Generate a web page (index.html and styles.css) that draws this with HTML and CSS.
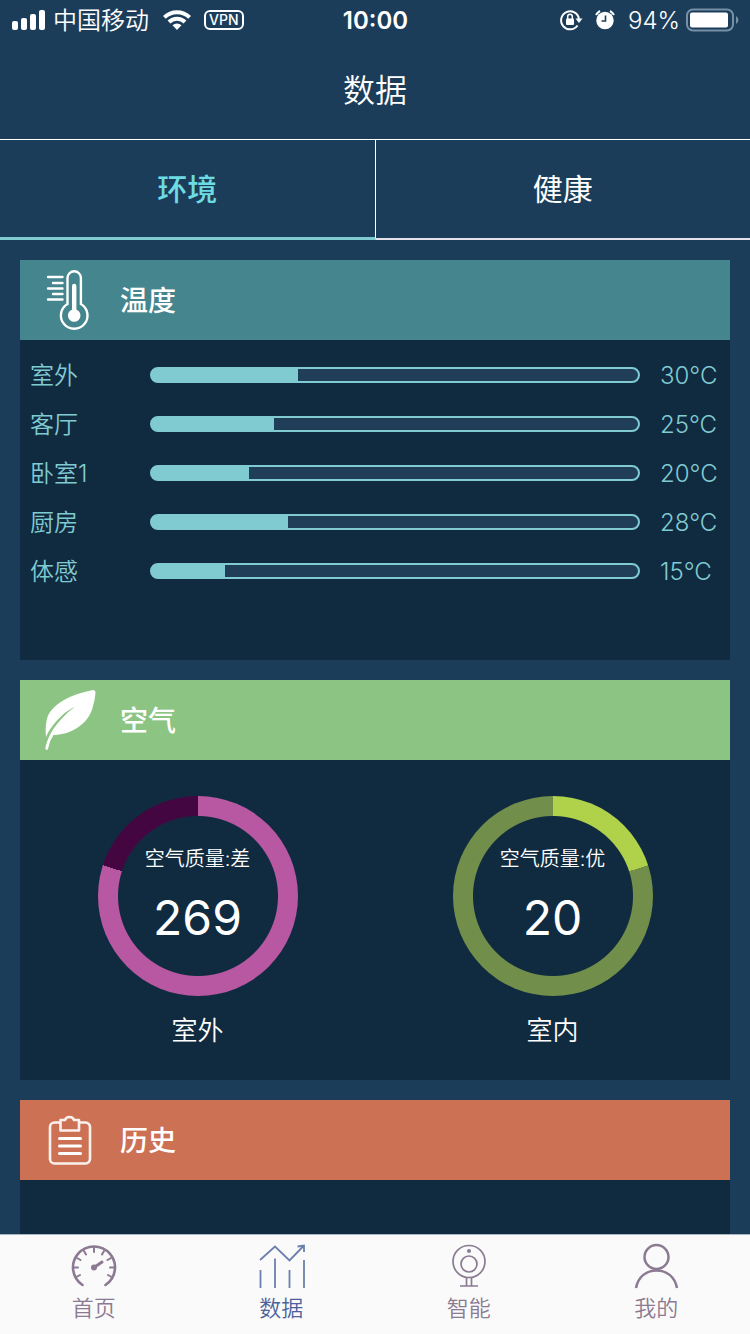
FILE: index.html
```html
<!DOCTYPE html>
<html lang="zh-CN">
<head>
<meta charset="utf-8">
<meta name="viewport" content="width=device-width, initial-scale=1">
<title>数据</title>
<link rel="stylesheet" href="styles.css">
</head>
<body>
<div class="app">
  <div class="status">
    <div class="status-side">
      <svg width="34" height="20" viewBox="0 0 34 20" fill="currentColor" aria-hidden="true">
        <rect x="0" y="11" width="6" height="9" rx="2"/><rect x="9" y="8" width="6" height="12" rx="2"/><rect x="18" y="4" width="6" height="16" rx="2"/><rect x="27" y="0" width="6" height="20" rx="2"/>
      </svg>
      <span class="carrier">中国移动</span>
      <svg class="wifi" width="28" height="20" viewBox="0 0 28 20" aria-hidden="true">
        <g fill="none" stroke="currentColor" stroke-width="4"><path d="M1.4 7.4A18 18 0 0 1 26.600 7.400"/><path d="M6 12A11.500 11.500 0 0 1 22 12"/></g>
        <path fill="currentColor" d="M14 20l-4.500-4.800a6.500 6.500 0 0 1 9 0z"/>
      </svg>
      <span class="vpn">VPN</span>
    </div>
    <time class="clock">10:00</time>
    <div class="status-side status-right">
      <svg width="24" height="22" viewBox="0 0 24 22" aria-hidden="true">
        <path d="M18.500 16.500A9 9 0 1 1 20 10" fill="none" stroke="currentColor" stroke-width="2"/>
        <path d="M16.500 9.500h7L20 14z" fill="currentColor"/>
        <rect x="7" y="9.500" width="8" height="6.500" rx="1" fill="currentColor"/>
        <path d="M8.700 10V7.500a2.300 2.300 0 0 1 4.600 0V10" fill="none" stroke="currentColor" stroke-width="1.500"/>
      </svg>
      <svg class="alarm" width="20" height="20" viewBox="0 0 20 20" aria-hidden="true">
        <circle cx="10" cy="10.500" r="8.700" fill="currentColor"/>
        <path d="M10.500 5.500v5.500H6.500" fill="none" stroke="#1c3d5a" stroke-width="1.600"/>
        <path d="M1 5a10 10 0 0 1 4-4M19 5a10 10 0 0 0-4-4" fill="none" stroke="currentColor" stroke-width="2"/>
      </svg>
      <span class="percent">94%</span>
      <svg width="53" height="24" viewBox="0 0 53 24" aria-hidden="true">
        <rect x="1" y="1.500" width="46" height="21" rx="6" fill="none" stroke="#7690a6" stroke-width="2"/>
        <rect x="4" y="4.500" width="38" height="15" rx="2" fill="#fff"/>
        <path d="M50 8a4.500 4.500 0 0 1 0 8z" fill="#7690a6"/>
      </svg>
    </div>
  </div>

  <header class="titlebar"><h1>数据</h1></header>

  <div class="tabs" role="tablist">
    <button class="tab tab-active" role="tab" aria-selected="true">环境</button>
    <button class="tab" role="tab" aria-selected="false">健康</button>
  </div>

  <main class="content">
    <section class="card">
      <div class="card-head head-temp">
        <svg class="card-icon" viewBox="0 0 60 60" fill="none" stroke="currentColor" stroke-width="2.400" stroke-linecap="round" aria-hidden="true">
          <path d="M27.500 34V8a6.700 6.700 0 0 1 13.400 0v26a13.300 13.300 0 1 1-13.400 0z"/>
          <path d="M34.200 16v28" stroke-width="4.400"/><circle cx="34.200" cy="45.500" r="6.300" fill="currentColor" stroke="none"/>
          <path d="M8 7h14.500M13 13h9.500M8 18.500h14.500M13 24h9.500M8 29.500h14.500"/>
        </svg>
        <h2>温度</h2>
      </div>
      <div class="card-body">
        <ul class="temps">
          <li><span>室外</span><div class="track"><div class="fill" style="width:30%"></div></div><span>30°C</span></li>
          <li><span>客厅</span><div class="track"><div class="fill" style="width:25%"></div></div><span>25°C</span></li>
          <li><span>卧室1</span><div class="track"><div class="fill" style="width:20%"></div></div><span>20°C</span></li>
          <li><span>厨房</span><div class="track"><div class="fill" style="width:28%"></div></div><span>28°C</span></li>
          <li><span>体感</span><div class="track"><div class="fill" style="width:15%"></div></div><span>15°C</span></li>
        </ul>
      </div>
    </section>

    <section class="card">
      <div class="card-head head-air">
        <svg class="card-icon" viewBox="0 0 60 60" aria-hidden="true">
          <path fill="currentColor" d="M53 0C45 2 34 4 24 10C14 16 8 22 6.500 31C5.500 37 5.500 42 6 47C9 40 15 32 22 25.500Q29 19 35 17C30 20 25 25 20 30.500C13 38 8 47 5.500 57Q5 60 7 60Q8 60 8.500 57Q10 50 13.500 45C20 45 29 43 37 38C46 32 50 26 52.500 18Q55 10 55.500 3Q55.500 0 53 0z"/>
        </svg>
        <h2>空气</h2>
      </div>
      <div class="card-body gauges">
        <figure class="gauge">
          <div class="ring ring-bad"><span class="quality">空气质量:差</span><strong>269</strong></div>
          <figcaption>室外</figcaption>
        </figure>
        <figure class="gauge">
          <div class="ring ring-good"><span class="quality">空气质量:优</span><strong>20</strong></div>
          <figcaption>室内</figcaption>
        </figure>
      </div>
    </section>

    <section class="card">
      <div class="card-head head-history">
        <svg class="card-icon" viewBox="0 0 60 60" fill="none" stroke="currentColor" stroke-linejoin="round" aria-hidden="true">
          <path stroke-width="2.600" opacity=".9" d="M20 12.500h-5.500a4.500 4.500 0 0 0-4.500 4.500v32a4.500 4.500 0 0 0 4.500 4.500h31a4.500 4.500 0 0 0 4.500-4.500V17a4.500 4.500 0 0 0-4.500-4.500H40M20.500 10h4.500q1-3 4.500-3t4.500 3h5v10.500H20.500z"/>
          <path stroke-width="3" stroke-linecap="round" d="M19.500 28.500h21M19.500 36h21M19.500 43.500h21"/>
        </svg>
        <h2>历史</h2>
      </div>
      <div class="card-body"></div>
    </section>
  </main>

  <nav class="nav">
    <a class="nav-item" href="#home">
      <svg class="nav-icon" viewBox="0 0 48 48" fill="none" stroke="currentColor" stroke-width="2" stroke-linecap="round" aria-hidden="true">
        <path stroke-width="2.600" d="M12.500 42A21 21 0 1 1 35.500 42"/>
        <path d="M24 5v4M14 8l2 3.500M34 8l-2 3.500M7 15l3.500 2M41 15l-3.500 2M4 24.500h4M44 24.500h-4M6.500 34l3.500-2M41.500 34L38 32"/>
        <path stroke-width="3" d="M24 24.500l8-5.500"/><circle cx="24" cy="24.500" r="3" fill="currentColor" stroke="none"/>
      </svg>
      <span>首页</span>
    </a>
    <a class="nav-item nav-current" href="#data" aria-current="page">
      <svg class="nav-icon" viewBox="0 0 48 48" fill="none" stroke="#6c7fae" stroke-width="1.800" aria-hidden="true">
        <path d="M3.500 27v18M18 15.500V45M32.500 27v18M47 17v28M3 17L18 3.500 32.500 17.500 46.500 3M40.500 3.500l6.500-1V9"/>
      </svg>
      <span>数据</span>
    </a>
    <a class="nav-item" href="#smart">
      <svg class="nav-icon" viewBox="0 0 48 48" fill="none" stroke="currentColor" stroke-width="1.700" aria-hidden="true">
        <circle cx="24" cy="18.500" r="16"/><circle cx="24" cy="21" r="8"/><circle cx="24" cy="8" r="2" fill="currentColor" stroke="none"/>
        <path d="M21.500 34.500V43M26.500 34.500V43M15 43h18"/>
      </svg>
      <span>智能</span>
    </a>
    <a class="nav-item" href="#me">
      <svg class="nav-icon" viewBox="0 0 48 48" fill="none" stroke="currentColor" stroke-width="2.500" aria-hidden="true">
        <circle cx="24.500" cy="14" r="12"/><path d="M4 45C6 34 14 27.500 24.500 27.500S43 34 45 45"/>
      </svg>
      <span>我的</span>
    </a>
  </nav>
</div>
</body>
</html>
```

FILE: styles.css
```css
* { box-sizing: border-box; }

body {
  margin: 0;
  background: #1c3d5a;
  color: #fff;
  font-family: Inter, "Noto Sans CJK SC", sans-serif;
}

h1, h2, ul, figure { margin: 0; padding: 0; }

.app { display: flex; flex-direction: column; height: 100vh; }

/* Status bar */
.status { display: flex; align-items: center; height: 40px; padding: 0 11px 0 12px; font-size: 24px; line-height: 40px; }
.status-side { flex: 1; display: flex; align-items: center; }
.status-right { justify-content: flex-end; }
.carrier { margin-left: 7px; padding-top: 2px; font-weight: 350; }
.wifi { margin: 0 13px 0 14px; }
.vpn { padding: 0 3px; border: 2px solid #fff; border-radius: 6px; font-size: 14px; line-height: 16px; font-weight: 500; }
.clock { padding-top: 2px; font-weight: 600; }
.alarm { margin: 0 13px 0 12px; }
.percent { margin-right: 6px; padding-top: 2px; font-weight: 350; }

/* Title and tabs */
.titlebar { padding: 27px 0 24px; text-align: center; }
.titlebar h1 { font-size: 32px; line-height: 48px; font-weight: 350; }
.tabs { display: flex; height: 101px; border-top: 1px solid #fff; }
.tab {
  flex: 1;
  padding: 0;
  border: 0;
  border-bottom: 2px solid #e4e2e8;
  background: none;
  color: #fff;
  font: 400 30px/96px Inter, "Noto Sans CJK SC", sans-serif;
}
.tab-active { border-right: 1px solid #fff; border-bottom: 3px solid #80cad1; color: #6ddbe2; font-weight: 500; }

/* Cards */
.content { flex: 1; min-height: 0; display: flex; flex-direction: column; gap: 20px; padding: 20px; overflow-y: auto; scrollbar-width: none; }
.card { flex: none; background: #102b40; }
.card-head { display: flex; align-items: center; gap: 20px; height: 80px; padding: 0 20px; }
.card-head h2 { padding-top: 2px; font-size: 28px; line-height: 40px; font-weight: 500; }
.card-icon { width: 60px; height: 60px; }
.head-temp { background: #45858d; }
.head-air { background: #8cc484; }
.head-history { background: #cd7154; }
.card-body { min-height: 320px; }

.temps { padding: 10px; list-style: none; color: #80cad1; font-size: 24px; font-weight: 350; }
.temps li { display: grid; grid-template-columns: 100px 1fr 60px; gap: 20px; align-items: center; height: 49px; line-height: 40px; white-space: nowrap; }
.temps span { padding-top: 2px; }
.track { height: 16px; border: 2px solid #80cad1; border-radius: 8px; background: linear-gradient(90deg, #80cad1 10%, #213e59 10%); overflow: hidden; }
.fill { height: 100%; background: #80cad1; }

.gauges { display: grid; grid-template-columns: 1fr 1fr; padding-top: 36px; }
.gauge { display: flex; flex-direction: column; align-items: center; gap: 15px; }
.gauge figcaption { font-size: 26px; line-height: 40px; font-weight: 350; }
.ring {
  display: flex;
  flex-direction: column;
  align-items: center;
  width: 200px;
  height: 200px;
  padding-top: 47px;
  border-radius: 50%;
}
.ring-bad { background: radial-gradient(closest-side, #102b40 79.500%, transparent 80.500%), conic-gradient(#b857a2 80%, #440640 0); }
.ring-good { background: radial-gradient(closest-side, #102b40 79.500%, transparent 80.500%), conic-gradient(#b0d24b 20%, #718e4b 0); }
.quality { font-size: 20px; line-height: 32px; font-weight: 350; }
.ring strong { font-size: 48px; line-height: 86px; font-weight: 400; }

/* Bottom navigation */
.nav { display: flex; height: 100px; border-top: 1px solid #a8b5c2; background: #fafafa; }
.nav-item { flex: 1; display: flex; flex-direction: column; align-items: center; padding-top: 8px; color: #8b7a92; font-size: 22px; line-height: 34px; text-decoration: none; font-weight: 350; }
.nav-current { color: #4d629a; }
.nav-icon { width: 48px; height: 48px; overflow: visible; }
```
